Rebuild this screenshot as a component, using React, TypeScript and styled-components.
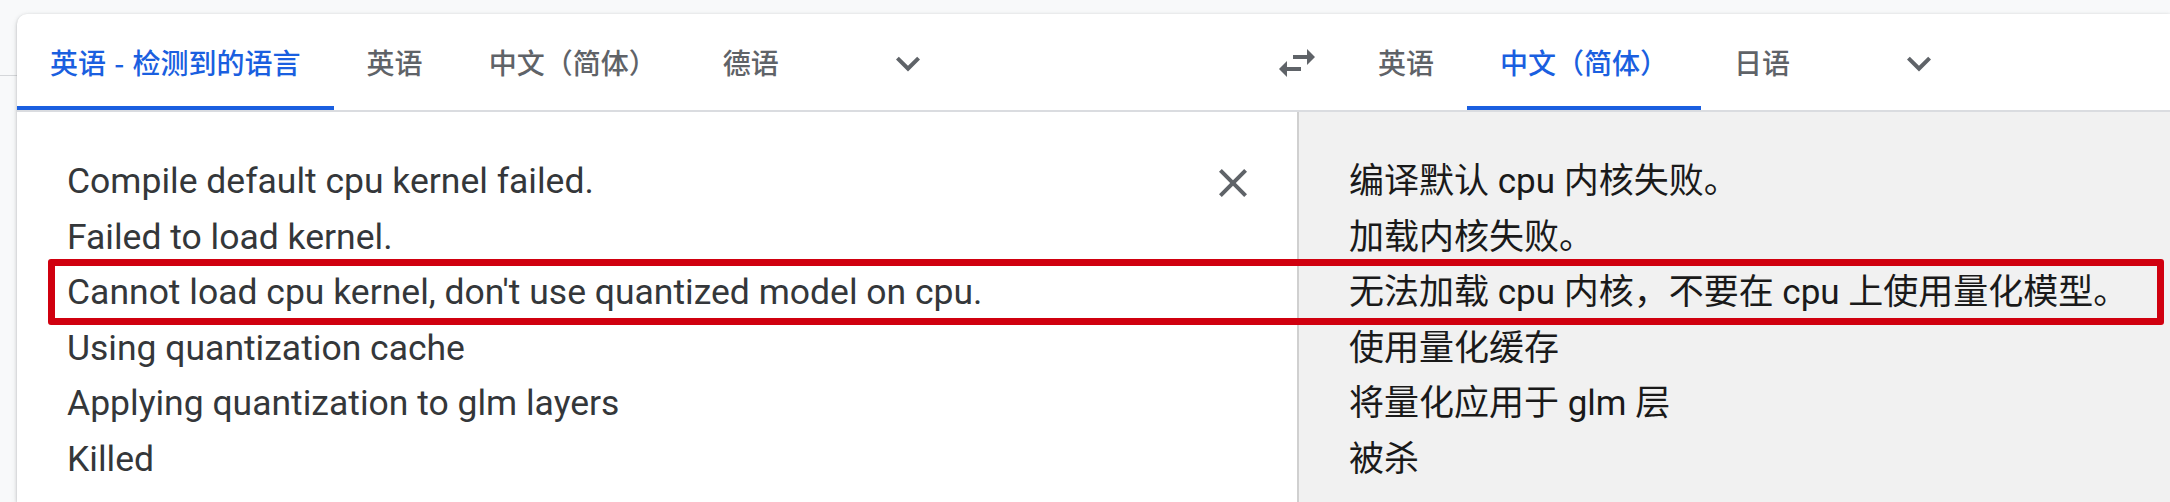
import React from "react";
import styled, { createGlobalStyle } from "styled-components";

const GlobalStyle = createGlobalStyle`
  html, body { margin: 0; padding: 0; background: #f8f9fa; }
  * { box-sizing: border-box; }
`;

const Page = styled.div`
  height: 502px;
  overflow: hidden;
  padding: 14px 0 0 17px;
  background:
    linear-gradient(#d5d7da, #d5d7da) 0 75px / 17px 1px no-repeat,
    #f8f9fa;
`;

const Card = styled.div`
  height: 100%;
  background: #fff;
  border-top-left-radius: 10px;
  box-shadow: 0 1px 3px rgba(60, 64, 67, 0.3), 0 2px 6px rgba(60, 64, 67, 0.12);
  display: flex;
  flex-direction: column;
`;

const Header = styled.div`
  display: grid;
  grid-template-columns: 1256px 48px 1fr;
  height: 98px;
  border-bottom: 2px solid #dadce0;
`;

const LangBar = styled.div<{ $right?: boolean }>`
  display: flex;
  align-items: stretch;
  padding-left: ${(p) => (p.$right ? "24px" : "0")};
`;

const Tab = styled.div<{ $active?: boolean }>`
  display: flex;
  align-items: center;
  padding: 4px 33px 0;
  border-bottom: 4px solid ${(p) => (p.$active ? "#1a5fe0" : "transparent")};
  font-family: "Noto Sans CJK SC", Roboto, sans-serif;
  font-size: 28px;
  font-weight: 500;
  word-spacing: 2px;
  color: ${(p) => (p.$active ? "#1a5fe0" : "#5f6368")};
  white-space: nowrap;
`;

const IconButton = styled.div<{ $ml?: number }>`
  width: 48px;
  display: flex;
  align-items: center;
  justify-content: center;
  margin-left: ${(p) => p.$ml ?? 0}px;
  color: #5f6368;
  padding-top: 2px;
`;

const Body = styled.div`
  flex: 1;
  position: relative;
  display: grid;
  grid-template-columns: 1282px 1fr;
`;

const SourcePanel = styled.div`
  display: flex;
  align-items: flex-start;
  padding: 42px 0 0 50px;
  border-right: 2px solid #d0d0d0;
`;

const TextBlock = styled.div`
  flex: 1;
  font-family: Roboto, "Noto Sans CJK SC", sans-serif;
  font-size: 35.5px;
  line-height: 55.6px;
  color: #34373a;
  white-space: pre;
`;

const CloseButton = styled.div`
  width: 48px;
  height: 48px;
  margin: 5px 40px 0 0;
  display: flex;
  align-items: center;
  justify-content: center;
  color: #5f6368;
`;

const TargetPanel = styled.div`
  background: #f1f1f1;
  padding: 42px 0 0 50px;
`;

const TargetText = styled.div`
  font-family: Roboto, "Noto Sans CJK SC", sans-serif;
  font-size: 35px;
  line-height: 55.6px;
  color: #1a1a1a;
  white-space: pre;
`;

const Highlight = styled.div`
  position: absolute;
  left: 31px;
  top: 147px;
  width: 2116px;
  height: 66px;
  border: 7px solid #d0000f;
  border-radius: 3px;
  pointer-events: none;
`;

const Chevron = () => (
  <svg width="53" height="53" viewBox="0 0 24 24" fill="currentColor">
    <path d="M16.59 8.59L12 13.17 7.41 8.59 6 10l6 6 6-6z" />
  </svg>
);

const Swap = () => (
  <svg width="48" height="48" viewBox="0 0 24 24" fill="currentColor">
    <path d="M6.99 11L3 15l3.99 4v-3H14v-2H6.99v-3zM21 9l-3.99-4v3H10v2h7.01v3L21 9z" />
  </svg>
);

const Close = () => (
  <svg width="48" height="48" viewBox="0 0 24 24" fill="currentColor">
    <path d="M19 6.41L17.59 5 12 10.59 6.41 5 5 6.41 10.59 12 5 17.59 6.41 19 12 13.41 17.59 19 19 17.59 13.41 12z" />
  </svg>
);

const sourceLines = [
  "Compile default cpu kernel failed.",
  "Failed to load kernel.",
  "Cannot load cpu kernel, don't use quantized model on cpu.",
  "Using quantization cache",
  "Applying quantization to glm layers",
  "Killed",
];

const targetLines = [
  "编译默认 cpu 内核失败。",
  "加载内核失败。",
  "无法加载 cpu 内核，不要在 cpu 上使用量化模型。",
  "使用量化缓存",
  "将量化应用于 glm 层",
  "被杀",
];

export default function App() {
  return (
    <>
      <GlobalStyle />
      <Page>
        <Card>
          <Header>
            <LangBar>
              <Tab $active>英语 - 检测到的语言</Tab>
              <Tab>英语</Tab>
              <Tab>中文（简体）</Tab>
              <Tab>德语</Tab>
              <IconButton $ml={72}>
                <Chevron />
              </IconButton>
            </LangBar>
            <IconButton>
              <Swap />
            </IconButton>
            <LangBar $right>
              <Tab>英语</Tab>
              <Tab $active>中文（简体）</Tab>
              <Tab>日语</Tab>
              <IconButton $ml={72}>
                <Chevron />
              </IconButton>
            </LangBar>
          </Header>
          <Body>
            <SourcePanel>
              <TextBlock>{sourceLines.join("\n")}</TextBlock>
              <CloseButton>
                <Close />
              </CloseButton>
            </SourcePanel>
            <TargetPanel>
              <TargetText>{targetLines.join("\n")}</TargetText>
            </TargetPanel>
            <Highlight />
          </Body>
        </Card>
      </Page>
    </>
  );
}
